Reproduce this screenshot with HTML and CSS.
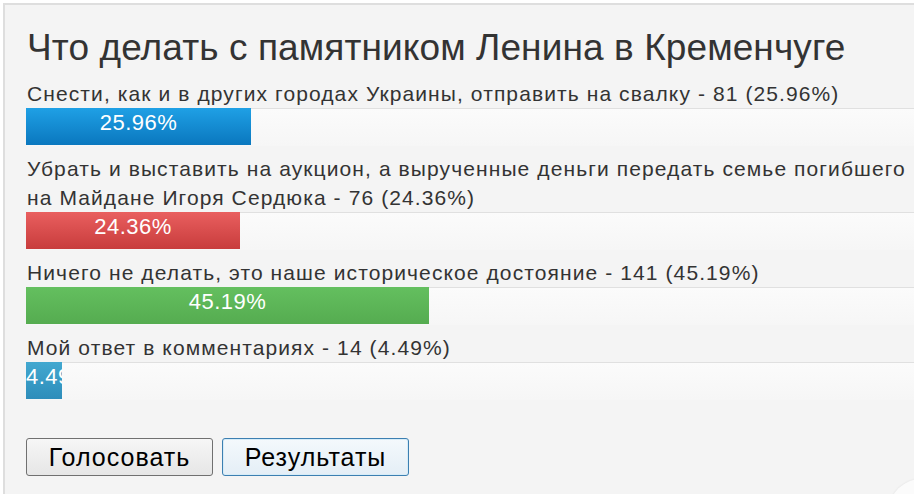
FILE: index.html
```html
<!DOCTYPE html>
<html lang="ru">
<head>
<meta charset="utf-8">
<title>Опрос</title>
<link rel="stylesheet" href="styles.css">
</head>
<body>
<div class="poll">
  <h1 class="poll-title">Что делать с памятником Ленина в Кременчуге</h1>
  <div class="answer">
    <div class="answer-text">Снести, как и в других городах Украины, отправить на свалку - 81 (25.96%)</div>
    <div class="track"><div class="bar bar-blue" style="width:225px">25.96%</div></div>
  </div>
  <div class="answer">
    <div class="answer-text">Убрать и выставить на аукцион, а вырученные деньги передать семье погибшего на Майдане Игоря Сердюка - 76 (24.36%)</div>
    <div class="track"><div class="bar bar-red" style="width:214px">24.36%</div></div>
  </div>
  <div class="answer">
    <div class="answer-text">Ничего не делать, это наше историческое достояние - 141 (45.19%)</div>
    <div class="track"><div class="bar bar-green" style="width:403px">45.19%</div></div>
  </div>
  <div class="answer">
    <div class="answer-text">Мой ответ в комментариях - 14 (4.49%)</div>
    <div class="track"><div class="bar bar-teal" style="width:36px">4.49%</div></div>
  </div>
  <div class="actions">
    <button class="btn" type="button">Голосовать</button>
    <button class="btn btn-focus" type="button">Результаты</button>
  </div>
  <div class="corner"></div>
</div>
</body>
</html>
```
FILE: styles.css
```css
html, body {
  margin: 0;
  padding: 0;
  background: #ffffff;
  overflow: hidden;
}
body {
  padding: 3px 0 0 3px;
  font-family: "Liberation Sans", Arial, sans-serif;
  color: #333333;
}
.poll {
  position: relative;
  width: 940px;
  height: 520px;
  box-sizing: border-box;
  border-top: 2px solid #dedede;
  border-left: 2px solid #dedede;
  background: #f4f4f4;
  padding: 22px 0 0 21px;
  overflow: hidden;
}
.poll-title {
  margin: 0 0 10px 1px;
  font-size: 37px;
  line-height: 42px;
  font-weight: normal;
  letter-spacing: 0.1px;
  color: #333333;
  white-space: nowrap;
}
.answer {
  margin-bottom: 8px;
}
.answer-text {
  font-size: 21px;
  line-height: 29px;
  letter-spacing: 1.1px;
  color: #333333;
  padding-left: 1px;
  width: 900px;
}
.track {
  height: 37px;
  border-top: 1px solid #e0e0e0;
  background: linear-gradient(#fbfbfb, #f6f6f6);
}
.bar {
  height: 37px;
  margin-top: -1px;
  overflow: hidden;
  white-space: nowrap;
  text-align: center;
  color: #ffffff;
  font-size: 22px;
  line-height: 29px;
  letter-spacing: 0.5px;
}
.bar-blue { background: linear-gradient(#1fa0e5, #0a77be); }
.bar-red { background: linear-gradient(#e95f5f, #c83c3c); }
.bar-green { background: linear-gradient(#64bf5f, #55ac50); }
.bar-teal { background: linear-gradient(#42a8d0, #2e8dba); }
.actions {
  display: flex;
  gap: 9px;
  margin-top: 38px;
}
.btn {
  width: 187px;
  height: 38px;
  padding: 0;
  border: 1px solid #707070;
  border-radius: 3px;
  background: linear-gradient(#f6f6f6, #e6e6e6);
  font-family: "Liberation Sans", Arial, sans-serif;
  font-size: 25px;
  letter-spacing: 1px;
  color: #000000;
}
.btn-focus {
  border-color: #3c7fb1;
  box-shadow: inset 0 0 0 1px #d6ecf8;
  background: linear-gradient(#f4f9fc, #e4eef6);
}
.corner {
  position: absolute;
  left: 884px;
  top: 474px;
  width: 64px;
  height: 64px;
  border-radius: 50%;
  background: #fbfbfb;
  box-shadow: 0 0 2px #dcdcdc;
}
```
